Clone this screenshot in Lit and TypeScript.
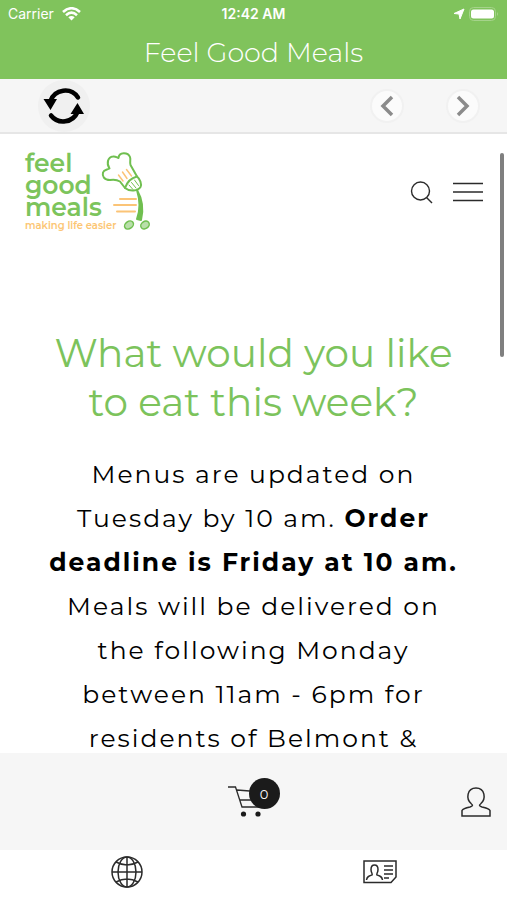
import { LitElement, html, css } from "lit";
import { customElement } from "lit/decorators.js";

@customElement("app-root")
export class AppRoot extends LitElement {
  static styles = css`
    :host {
      display: flex;
      flex-direction: column;
      height: 100vh;
      overflow: hidden;
      background: #fff;
      color: #000;
      font-family: Montserrat, Inter, "Liberation Sans", sans-serif;
    }
    * {
      box-sizing: border-box;
    }
    svg {
      display: block;
      fill: none;
    }
    button,
    .tab {
      display: flex;
      align-items: center;
      justify-content: center;
      padding: 0;
      border: 0;
      background: none;
      color: #2b2b2b;
    }
    .top {
      flex: none;
      background: #80c35c;
      color: #fff;
    }
    .status {
      display: grid;
      grid-template-columns: 1fr auto 1fr;
      align-items: center;
      height: 28px;
      padding: 0 8px;
      font: 400 14px/28px Inter, sans-serif;
    }
    .status span,
    .status div {
      display: flex;
      align-items: center;
      gap: 8px;
    }
    .status strong {
      font-weight: 600;
    }
    .status .power {
      justify-content: flex-end;
      gap: 4px;
    }
    .title {
      margin: 0;
      height: 51px;
      font-size: 27px;
      font-weight: 300;
      line-height: 50px;
      text-align: center;
    }
    .tools {
      flex: none;
      display: flex;
      align-items: center;
      height: 55px;
      padding: 0 27px 0 38px;
      background: #f6f6f6;
      border-bottom: 2px solid #e6e6e6;
    }
    .reload {
      width: 52px;
      height: 52px;
      margin-right: auto;
      border-radius: 50%;
      background: #f0f0f0;
      color: #000;
    }
    .step {
      width: 34px;
      height: 34px;
      margin-left: 42px;
      border: 2px solid #f1f1f1;
      border-radius: 50%;
      background: #fbfbfb;
      color: #8b8b8b;
    }
    .page {
      position: relative;
      flex: 1;
      min-height: 0;
      overflow: hidden;
    }
    .thumb {
      position: absolute;
      top: 19px;
      right: 3px;
      width: 4px;
      height: 204px;
      border-radius: 2px;
      background: #7f7f7f;
    }
    .site {
      display: flex;
      align-items: center;
      gap: 20px;
      height: 116px;
      padding: 0 24px 0 25px;
    }
    .logo {
      display: flex;
      margin-right: auto;
      color: #7cc45c;
      text-decoration: none;
    }
    .words {
      width: 73px;
      padding-top: 2px;
      font-size: 25px;
      font-weight: 600;
      line-height: 22px;
      white-space: nowrap;
    }
    .words span {
      display: block;
    }
    .words .tag {
      color: #fcc674;
      font-size: 10px;
      font-weight: 600;
      line-height: 16px;
    }
    h1 {
      margin: 79px 0 0;
      color: #7cc35c;
      font-size: 39px;
      font-weight: 400;
      line-height: 49px;
      text-align: center;
    }
    .intro {
      margin: 25px 0 0;
      font-size: 25px;
      font-weight: 400;
      line-height: 44px;
      letter-spacing: 2px;
      text-align: center;
      white-space: nowrap;
    }
    .intro b {
      font-weight: 700;
    }
    .account {
      flex: none;
      display: grid;
      grid-template-columns: 1fr auto 1fr;
      align-items: center;
      height: 97px;
      padding: 0 16px;
      background: #f6f6f6;
    }
    .cart {
      grid-column: 2;
      position: relative;
      width: 52px;
      height: 44px;
      justify-content: flex-start;
    }
    .count {
      position: absolute;
      top: -2px;
      right: 0;
      width: 31px;
      height: 31px;
      border-radius: 50%;
      background: #1b1b1b;
      color: #fff;
      font: 400 13px/32px Montserrat, Inter, sans-serif;
      text-align: center;
    }
    .user {
      justify-self: end;
    }
    .tabs {
      flex: none;
      display: grid;
      grid-template-columns: 1fr 1fr;
      height: 50px;
      padding-bottom: 7px;
    }
  `;

  render() {
    return html`
      <header class="top">
        <div class="status">
          <span
            >Carrier
            <svg width="19" height="14" viewBox="0 0 19 14" stroke="#fff" stroke-width="2.6" aria-hidden="true">
              <path d="M1 5Q9.500-2.500 18 5M4 8.200Q9.500 3.200 15 8.200" />
              <path d="M6.300 10.200Q9.500 7.600 12.700 10.200L9.500 13.500Z" fill="#fff" stroke="none" />
            </svg>
          </span>
          <strong>12:42 AM</strong>
          <div class="power">
            <svg width="12" height="12" viewBox="0 0 12 12" aria-hidden="true">
              <path d="M11 1 7 11 6 6 1 5.500Z" fill="#fff" stroke="#fff" stroke-linejoin="round" />
            </svg>
            <svg width="30" height="14" viewBox="0 0 30 14" aria-hidden="true">
              <rect x=".5" y=".5" width="26" height="13" rx="4" stroke="#a5d38b" />
              <rect x="2" y="2.500" width="23" height="9" rx="2.500" fill="#fff" />
              <path d="M28 5v4q2-2 0-4" fill="#a5d38b" />
            </svg>
          </div>
        </div>
        <h2 class="title">Feel Good Meals</h2>
      </header>

      <nav class="tools" aria-label="Browser">
        <button class="reload" aria-label="Reload">
          <svg width="42" height="40" viewBox="0 0 42 40" stroke="currentColor" stroke-width="4.500" stroke-linecap="round">
            <path d="M7.500 15A15.500 15.500 0 0 1 35 11.500M34.500 26A15.500 15.500 0 0 1 8 29.500" />
            <path d="M.5 13H14L7.500 24ZM27.500 28H41L34.500 17Z" fill="currentColor" stroke="none" />
          </svg>
        </button>
        <button class="step" aria-label="Back">
          <svg width="14" height="22" viewBox="0 0 14 22" stroke="currentColor" stroke-width="3.500">
            <path d="M12 2 3 11l9 9" />
          </svg>
        </button>
        <button class="step" aria-label="Forward">
          <svg width="14" height="22" viewBox="0 0 14 22" stroke="currentColor" stroke-width="3.500">
            <path d="m2 2 9 9-9 9" />
          </svg>
        </button>
      </nav>

      <main class="page">
        <div class="site">
          <a class="logo" href="#">
            <div class="words">
              <span>feel</span><span>good</span><span>meals</span>
              <span class="tag">making life easier</span>
            </div>
            <svg width="54" height="82" viewBox="98 150 54 82" stroke="#70bf50" stroke-width="2" stroke-linejoin="round" stroke-linecap="round" aria-hidden="true">
              <path d="M125 188 120 181.500C116 179 113 179.500 110 180C104 180 102 176 103 172.500C104 169.500 107 170 109.500 168.500C106 163 108 157 113 156.500C115 156 117 157.500 118.500 158C119 151.500 128 152 130 157C131 160 129.500 162 130.500 165L137 176.500" />
              <path d="M125 188C127 182 131 178 137 176.500C140 179 142 184 140.500 187C138 191 130 192 125 188Z" />
              <path d="M129 185 133 189.500M131.500 182.500 136 188M134.500 180 138.500 185.500" stroke-width="1" />
              <path d="M118.500 175 123 181M122.500 172 127 178.500M126.500 169.500 131.500 176" stroke="#fbc477" stroke-width="1.500" />
              <path d="M137 190Q145 204 141 220L137 219Q142 206 137 190Z" fill="#70bf50" />
              <path d="M120 199H136M114 205H136M117 211.500H135" stroke="#fbc477" />
              <ellipse cx="129" cy="225" rx="4.800" ry="3.600" transform="rotate(-35 129 225)" fill="#b9dfaa" stroke-width="1.500" />
              <ellipse cx="145" cy="225" rx="4.500" ry="3.600" transform="rotate(-35 145 225)" fill="#b9dfaa" stroke-width="1.500" />
            </svg>
          </a>
          <button aria-label="Search">
            <svg width="23" height="24" viewBox="0 0 23 24" stroke="currentColor" stroke-width="1.400">
              <circle cx="10.500" cy="11" r="9" />
              <path d="m16.500 17.500 5.500 5.500" />
            </svg>
          </button>
          <button aria-label="Menu">
            <svg width="30" height="20" viewBox="0 0 30 20" stroke="currentColor" stroke-width="1.500">
              <path d="M0 1.500H30M0 10H30M0 18.500H30" />
            </svg>
          </button>
        </div>
        <h1>What would you like<br />to eat this week?</h1>
        <p class="intro">
          Menus are updated on<br />Tuesday by 10 am. <b>Order<br />deadline is Friday at 10 am.</b><br />Meals will be
          delivered on<br />the following Monday<br />between 11am - 6pm for<br />residents of Belmont &amp;
        </p>
        <div class="thumb"></div>
      </main>

      <section class="account" aria-label="Account">
        <button class="cart" aria-label="Cart">
          <svg width="40" height="34" viewBox="0 0 40 34" stroke="currentColor" stroke-width="1.300">
            <path d="M0 2H7.500L14 22H34M9 5 34 7M11.500 15H33" />
            <circle cx="15.500" cy="29" r="2.600" fill="#1b1b1b" stroke="none" />
            <circle cx="30" cy="29" r="2.600" fill="#1b1b1b" stroke="none" />
          </svg>
          <span class="count">0</span>
        </button>
        <button class="user" aria-label="Profile">
          <svg width="30" height="30" viewBox="0 0 30 30" stroke="currentColor" stroke-width="1.500">
            <path d="M1 29V23.500Q2 21.500 9 20C12 19 12 18 10.500 17C4.500 12 6 1 15 1S25.500 12 19.500 17C18 18 18 19 21 20Q28 21.500 29 23.500V29Z" />
          </svg>
        </button>
      </section>

      <nav class="tabs" aria-label="Sections">
        <a class="tab" href="#" aria-label="Website">
          <svg width="32" height="32" viewBox="0 0 32 32" stroke="currentColor" stroke-width="1.500">
            <circle cx="16" cy="16" r="15" />
            <ellipse cx="16" cy="16" rx="9" ry="15" />
            <path d="M16 1V31M1 16H31M5 6Q16 12 27 6M5 26Q16 20 27 26" />
          </svg>
        </a>
        <a class="tab" href="#" aria-label="Contact">
          <svg width="34" height="24" viewBox="0 0 34 24" stroke="currentColor" stroke-width="1.500">
            <path d="M1 1H33V17L28 22.500H1Z" />
            <path d="M3.500 20C4 16.500 6 16 9 15C10 14 8 13 8 9.500C8 3.500 15 3.500 15 9.500C15 13 13 14 14 15C17 16 19 16.500 19.500 20M21 6H30M21 10H30M21 14H30M21 18H26" />
          </svg>
        </a>
      </nav>
    `;
  }
}
